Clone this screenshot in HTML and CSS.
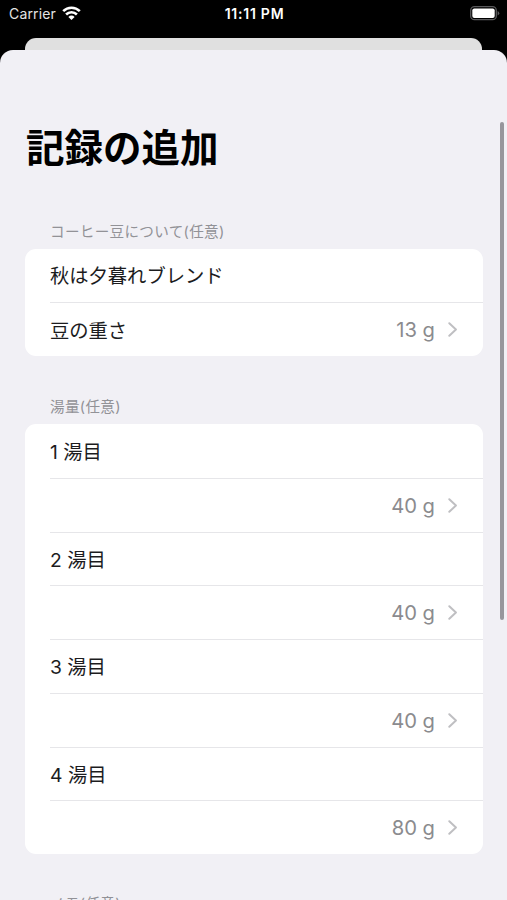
FILE: index.html
```html
<!DOCTYPE html>
<html lang="ja">
<head>
<meta charset="utf-8">
<title>記録の追加</title>
<link rel="stylesheet" href="styles.css">
</head>
<body>
<div class="screen">
  <header class="status">
    <div class="carrier"><span>Carrier</span>
      <svg class="wifi" width="19" height="14" viewBox="0 0 19 14" fill="none" stroke="#fff" stroke-width="2.6"><path d="M1.2 5.1a11.8 11.8 0 0 1 16.6 0"/><path d="M4.1 8.5a7.6 7.6 0 0 1 10.8 0"/><path d="M9.5 14 6.4 10.9a4.4 4.4 0 0 1 6.2 0z" fill="#fff" stroke="none"/></svg>
    </div>
    <div class="time">11:11 PM</div>
    <svg class="battery" width="30" height="15" viewBox="0 0 30 15"><rect x=".7" y=".7" width="25.6" height="13" rx="3.8" fill="none" stroke="#59595b" stroke-width="1.3"/><rect x="2.3" y="2.4" width="22.4" height="9.7" rx="2" fill="#fff"/><path d="M27.6 5v4.6q1.7-.8 1.7-2.3T27.6 5z" fill="#59595b"/></svg>
  </header>
  <div class="back-sheet"></div>
  <main class="sheet">
    <h1>記録の追加</h1>
    <h2>コーヒー豆について(任意)</h2>
    <section class="card">
      <div class="row"><span class="label">秋は夕暮れブレンド</span></div>
      <div class="row"><span class="label">豆の重さ</span><span class="value">13 g</span><svg class="chevron" viewBox="0 0 10 16"><path d="M1.3 1.3 8.4 8l-7.1 6.7"/></svg></div>
    </section>
    <h2>湯量(任意)</h2>
    <section class="card">
      <div class="row"><span class="label">1 湯目</span></div>
      <div class="row"><span class="value">40 g</span><svg class="chevron" viewBox="0 0 10 16"><path d="M1.3 1.3 8.4 8l-7.1 6.7"/></svg></div>
      <div class="row"><span class="label">2 湯目</span></div>
      <div class="row"><span class="value">40 g</span><svg class="chevron" viewBox="0 0 10 16"><path d="M1.3 1.3 8.4 8l-7.1 6.7"/></svg></div>
      <div class="row"><span class="label">3 湯目</span></div>
      <div class="row"><span class="value">40 g</span><svg class="chevron" viewBox="0 0 10 16"><path d="M1.3 1.3 8.4 8l-7.1 6.7"/></svg></div>
      <div class="row"><span class="label">4 湯目</span></div>
      <div class="row"><span class="value">80 g</span><svg class="chevron" viewBox="0 0 10 16"><path d="M1.3 1.3 8.4 8l-7.1 6.7"/></svg></div>
    </section>
    <h2>メモ(任意)</h2>
    <div class="scrollbar"></div>
  </main>
</div>
</body>
</html>
```
FILE: styles.css
```css
* { box-sizing: border-box; }
body { margin: 0; background: #000; font-family: Inter, "Noto Sans CJK JP", sans-serif; }
.screen { height: 900px; overflow: hidden; display: flex; flex-direction: column; }
.status {
  flex: none; height: 38px; padding: 0 7px 10px 9px; color: #fff;
  display: grid; grid-template-columns: 1fr auto 1fr; align-items: center;
  font-size: 14px; line-height: 18px;
}
.carrier { display: flex; align-items: center; gap: 6px; color: #e4e4e4; letter-spacing: 0.15px; }
.wifi { margin-top: -2px; }
.time { font-weight: 600; font-size: 14px; letter-spacing: 0.75px; }
.battery { justify-self: end; margin-top: -1px; }
.back-sheet { flex: none; height: 12px; margin: 0 25px; background: #e0e0e0; border-radius: 11px 11px 0 0; }
.sheet {
  position: relative; flex: 1; min-height: 0; overflow: hidden;
  padding: 69px 24.5px 0 25px; background: #f1f0f5; border-radius: 13px 13px 0 0;
}
h1 { margin: 0 0 45px 1px; font-size: 38.5px; line-height: 58px; font-weight: 700; color: #000; }
h2 { margin: 0 0 6.6px 25px; font-size: 14.6px; line-height: 20px; font-weight: 400; letter-spacing: 0.3px; color: #929297; }
.card { background: #fff; border-radius: 11px; margin-bottom: 41.4px; overflow: hidden; }
.card:nth-of-type(2) { margin-bottom: 40px; }
.row {
  height: 53.75px; margin-left: 25px; padding-right: 25px;
  display: flex; align-items: center; font-size: 19.3px; line-height: 28px; color: #1c1c1e;
}
.row + .row { border-top: 1px solid #e6e6e9; }
.label { padding-top: 2px; }
.value { margin-left: auto; padding-top: 1px; color: #8b8b8e; font-size: 20.2px; }
.chevron { width: 9.5px; height: 15px; margin-left: 13px; fill: none; stroke: #bfbfc2; stroke-width: 2.1; stroke-linecap: round; stroke-linejoin: round; }
.scrollbar { position: absolute; right: 3px; top: 72px; width: 4px; height: 498px; border-radius: 2px; background: #97969c; }
```
